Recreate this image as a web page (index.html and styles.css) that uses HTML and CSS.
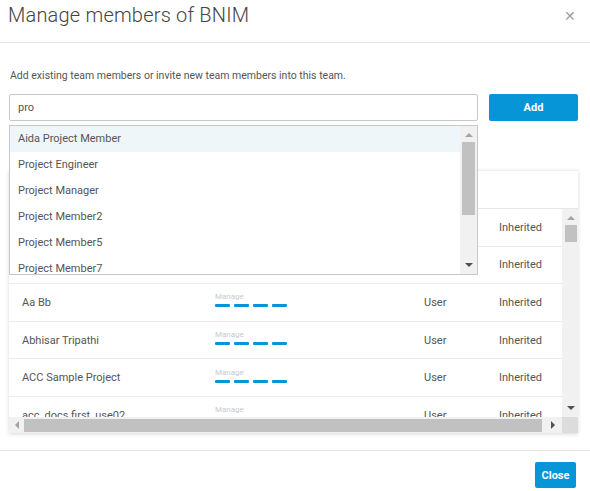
FILE: index.html
```html
<!DOCTYPE html>
<html lang="en">
<head>
    <meta charset="UTF-8">
    <title>Manage members of BNIM</title>
    <link rel="stylesheet" href="styles.css">
</head>
<body>
    <div class="modal-header">
        <h1>Manage members of BNIM</h1>
        <span class="close-x">&#x2715;</span>
    </div>

    <div class="modal-body">
        <p class="intro">Add existing team members or invite new team members into this team.</p>

        <div class="add-row">
            <div class="search-wrap">
                <input type="text" class="search-input" value="pro">
                <div class="dropdown">
                    <ul class="dropdown-list">
                        <li class="active">Aida Project Member</li>
                        <li>Project Engineer</li>
                        <li>Project Manager</li>
                        <li>Project Member2</li>
                        <li>Project Member5</li>
                        <li>Project Member7</li>
                    </ul>
                    <div class="vscroll">
                        <span class="arrow up"></span>
                        <span class="thumb dd-thumb"></span>
                        <span class="arrow down"></span>
                    </div>
                </div>
            </div>
            <button class="btn-primary add-btn">Add</button>
        </div>

        <div class="members-card">
            <div class="members-head"></div>
            <div class="members-grid">
                <div class="members-rows">
                    <div class="member-row">
                        <div class="col-name"></div>
                        <div class="col-manage"></div>
                        <div class="col-type"></div>
                        <div class="col-source">Inherited</div>
                    </div>
                    <div class="member-row">
                        <div class="col-name"></div>
                        <div class="col-manage"></div>
                        <div class="col-type"></div>
                        <div class="col-source">Inherited</div>
                    </div>
                    <div class="member-row">
                        <div class="col-name">Aa Bb</div>
                        <div class="col-manage"><span class="manage-label">Manage</span><span class="dashes"><i></i><i></i><i></i><i></i></span></div>
                        <div class="col-type">User</div>
                        <div class="col-source">Inherited</div>
                    </div>
                    <div class="member-row">
                        <div class="col-name">Abhisar Tripathi</div>
                        <div class="col-manage"><span class="manage-label">Manage</span><span class="dashes"><i></i><i></i><i></i><i></i></span></div>
                        <div class="col-type">User</div>
                        <div class="col-source">Inherited</div>
                    </div>
                    <div class="member-row">
                        <div class="col-name">ACC Sample Project</div>
                        <div class="col-manage"><span class="manage-label">Manage</span><span class="dashes"><i></i><i></i><i></i><i></i></span></div>
                        <div class="col-type">User</div>
                        <div class="col-source">Inherited</div>
                    </div>
                    <div class="member-row">
                        <div class="col-name">acc_docs first_use02</div>
                        <div class="col-manage"><span class="manage-label">Manage</span><span class="dashes"><i></i><i></i><i></i><i></i></span></div>
                        <div class="col-type">User</div>
                        <div class="col-source">Inherited</div>
                    </div>
                </div>
                <div class="vscroll table-v">
                    <span class="arrow up"></span>
                    <span class="thumb tbl-thumb"></span>
                    <span class="arrow down dark"></span>
                </div>
                <div class="hscroll">
                    <span class="arrow left"></span>
                    <span class="hthumb"></span>
                    <span class="arrow right"></span>
                </div>
                <div class="corner"></div>
            </div>
        </div>
    </div>

    <div class="modal-footer">
        <button class="btn-primary close-btn">Close</button>
    </div>
</body>
</html>
```

FILE: styles.css
```css
body {
    margin: 0;
    font-family: Roboto, "Liberation Sans", sans-serif;
    color: #555;
    background: #fff;
}
.modal-header {
    height: 42px;
    display: flex;
    align-items: center;
    justify-content: space-between;
    padding: 0 14px 0 8px;
    border-bottom: 1px solid #e6e6e6;
}
.modal-header h1 {
    margin: 0 0 12px 0;
    font-size: 20px;
    font-weight: 300;
    color: #444;
    letter-spacing: 0.2px;
}
.close-x {
    font-size: 14px;
    color: #a0a0a0;
    margin-bottom: 11px;
}
.modal-body {
    padding: 0 12px 0 9px;
}
.intro {
    margin: 26px 0 12px 1px;
    font-size: 10.5px;
    color: #555;
}
.add-row {
    display: flex;
    gap: 11px;
}
.search-wrap {
    position: relative;
    flex: 1;
}
.search-input {
    box-sizing: border-box;
    width: 100%;
    height: 27px;
    border: 1px solid #c8c8c8;
    border-radius: 2px;
    padding: 0 8px;
    font-family: inherit;
    font-size: 11px;
    color: #555;
    outline: none;
}
.btn-primary {
    background: #0696d7;
    color: #fff;
    border: none;
    border-radius: 2px;
    font-family: inherit;
    font-weight: bold;
    font-size: 11px;
}
.add-btn {
    width: 89px;
    height: 27px;
}
.dropdown {
    position: absolute;
    top: 31px;
    left: 0;
    right: 0;
    height: 150px;
    box-sizing: border-box;
    border: 1px solid #c8c8c8;
    background: #fff;
    display: flex;
    overflow: hidden;
    z-index: 5;
}
.dropdown-list {
    list-style: none;
    margin: 0;
    padding: 0;
    flex: 1;
}
.dropdown-list li {
    height: 26px;
    line-height: 26px;
    padding-left: 8px;
    font-size: 11px;
    color: #555;
}
.dropdown-list li.active {
    background: #eef6fa;
}
.vscroll {
    width: 17px;
    background: #f1f1f1;
    display: flex;
    flex-direction: column;
    align-items: center;
}
.arrow {
    width: 0;
    height: 0;
    border: 4px solid transparent;
}
.arrow.up {
    border-bottom-color: #a3a3a3;
    border-top-width: 0;
    margin-top: 7px;
}
.arrow.down {
    border-top-color: #505050;
    border-bottom-width: 0;
    margin-top: auto;
    margin-bottom: 7px;
}
.thumb {
    width: 13px;
    background: #c1c1c1;
}
.dd-thumb {
    height: 73px;
    margin-top: 5px;
}
.members-card {
    margin-top: 49px;
    box-shadow: 0 1px 4px rgba(0, 0, 0, 0.16);
    border-top: 1px solid #f0f0f0;
}
.members-head {
    height: 37px;
    border-bottom: 1px solid #e6e6e6;
}
.members-grid {
    display: grid;
    grid-template-columns: 1fr 16px;
    grid-template-rows: 208px 16px;
}
.members-rows {
    overflow: hidden;
}
.member-row {
    height: 36.6px;
    border-bottom: 1px solid #ececec;
    display: flex;
    align-items: center;
    font-size: 11px;
    color: #555;
}
.col-name {
    width: 193px;
    padding-left: 13px;
}
.col-manage {
    width: 209px;
    display: flex;
    flex-direction: column;
    gap: 3px;
    margin-top: -5px;
}
.manage-label {
    font-size: 8px;
    color: #c5ccd3;
}
.dashes {
    display: flex;
    gap: 4px;
}
.dashes i {
    width: 15px;
    height: 3px;
    border-radius: 1px;
    background: #0696d7;
}
.col-type {
    width: 75px;
}
.table-v .thumb {
    width: 12px;
}
.tbl-thumb {
    height: 17px;
    margin-top: 5px;
}
.hscroll {
    background: #f1f1f1;
    display: flex;
    align-items: center;
}
.arrow.left {
    border-right-color: #a3a3a3;
    border-left-width: 0;
    margin: 0 5px 0 6px;
}
.hthumb {
    flex: 1;
    height: 13px;
    background: #c1c1c1;
}
.arrow.right {
    border-left-color: #505050;
    border-right-width: 0;
    margin: 0 7px 0 9px;
}
.corner {
    background: #dcdcdc;
}
.modal-footer {
    margin-top: 17px;
    border-top: 1px solid #e6e6e6;
    display: flex;
    justify-content: flex-end;
    padding: 11px 14px 0 0;
}
.close-btn {
    width: 41px;
    height: 26px;
}
```
